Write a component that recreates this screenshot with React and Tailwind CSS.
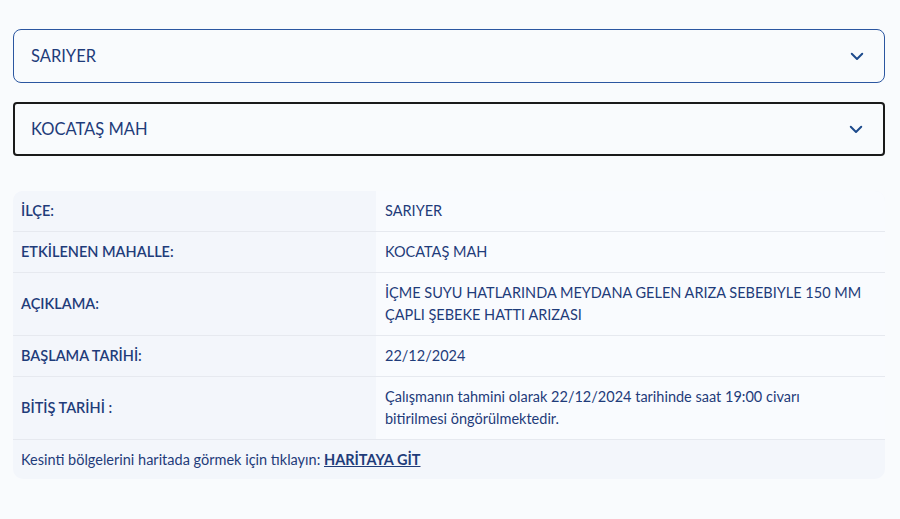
import React from 'react';

const rows = [
  { label: 'İLÇE:', value: 'SARIYER' },
  { label: 'ETKİLENEN MAHALLE:', value: 'KOCATAŞ MAH' },
  { label: 'AÇIKLAMA:', value: 'İÇME SUYU HATLARINDA MEYDANA GELEN ARIZA SEBEBIYLE 150 MM ÇAPLI ŞEBEKE HATTI ARIZASI' },
  { label: 'BAŞLAMA TARİHİ:', value: '22/12/2024' },
  { label: 'BİTİŞ TARİHİ :', value: 'Çalışmanın tahmini olarak 22/12/2024 tarihinde saat 19:00 civarı bitirilmesi öngörülmektedir.' },
];

const Chevron = () => (
  <svg width="18" height="18" viewBox="0 0 24 24" fill="none" stroke="#1d4a8c" strokeWidth="2.6" strokeLinecap="round" strokeLinejoin="round">
    <path d="M5 9l7 7 7-7" />
  </svg>
);

const Select = ({ value, active }) => (
  <div
    className={`flex items-center justify-between h-[54px] pr-[18px] bg-[#f9fbfd] ${
      active ? 'pl-[16px] border-2 border-[#1a1a1a] rounded-[4px]' : 'pl-[17px] border border-[#2b56a0] rounded-[8px]'
    }`}
  >
    <span className="text-[16.5px] text-[#1f3c7a]">{value}</span>
    <Chevron />
  </div>
);

export default function App() {
  return (
    <div className="min-h-[519px] bg-[#f9fbfd] px-[13px] pt-[29px] font-['Lato',sans-serif] text-[#1f3c7a]">
      <div className="w-[872px] flex flex-col gap-[19px]">
        <Select value="SARIYER" />
        <Select value="KOCATAŞ MAH" active />
      </div>

      <div className="w-[872px] mt-[35px] rounded-[10px] overflow-hidden bg-[#f3f6fb]">
        {rows.map((r) => (
          <div key={r.label} className="grid grid-cols-[363px_1fr] border-b border-[#e6e9ef]">
            <div className="bg-[#f3f6fb] flex items-center px-[8px] text-[14.5px] font-semibold">{r.label}</div>
            <div className="bg-[#f9fbfe] pl-[9px] pr-[21px] py-[9px] text-[14.5px] leading-[22px] flex items-center">
              {r.value}
            </div>
          </div>
        ))}
        <div className="px-[8px] h-[39px] flex items-center text-[14.5px]">
          <span>Kesinti bölgelerini haritada görmek için tıklayın:&nbsp;</span>
          <a className="font-bold underline">HARİTAYA GİT</a>
        </div>
      </div>
    </div>
  );
}
